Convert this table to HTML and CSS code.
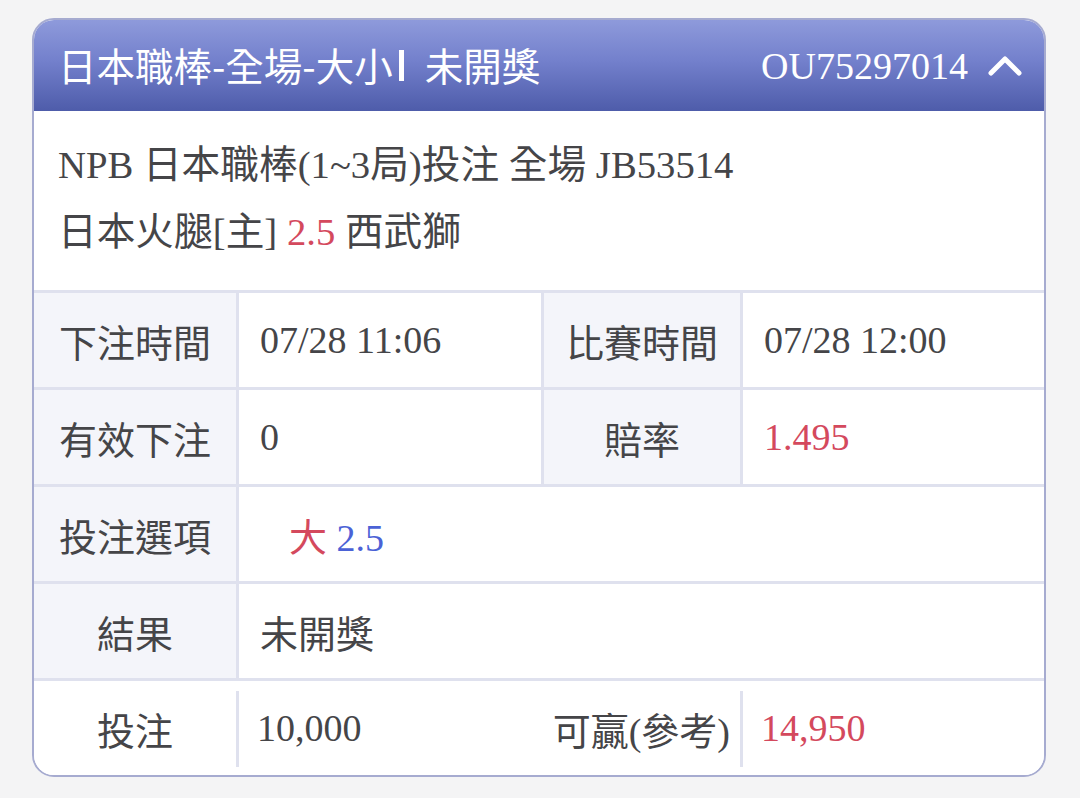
FILE: index.html
```html
<!DOCTYPE html>
<html lang="zh-Hant">
<head>
<meta charset="utf-8">
<title>注單</title>
<link rel="stylesheet" href="styles.css">
</head>
<body>
<div class="card">
  <div class="head">
    <div class="title">日本職棒-全場-大小<span class="bar"></span>未開獎</div>
    <div class="head-right">
      <span class="order">OU75297014</span>
      <svg class="chev" width="34" height="22" viewBox="0 0 34 22"><polyline points="3,19 17,5 31,19" fill="none" stroke="#fff" stroke-width="5" stroke-linecap="round" stroke-linejoin="round"/></svg>
    </div>
  </div>
  <div class="info">
    <div class="line">NPB 日本職棒(1~3局)投注 全場 JB53514</div>
    <div class="line">日本火腿[主] <span class="red">2.5</span> 西武獅</div>
  </div>
  <div class="table">
    <div class="row">
      <div class="cell label">下注時間</div>
      <div class="cell val">07/28 11:06</div>
      <div class="cell label">比賽時間</div>
      <div class="cell val">07/28 12:00</div>
    </div>
    <div class="row">
      <div class="cell label">有效下注</div>
      <div class="cell val">0</div>
      <div class="cell label">賠率</div>
      <div class="cell val red">1.495</div>
    </div>
    <div class="row">
      <div class="cell label">投注選項</div>
      <div class="cell val span3 pick"><span><span class="red">大</span> <span class="blue">2.5</span></span></div>
    </div>
    <div class="row">
      <div class="cell label">結果</div>
      <div class="cell val span3">未開獎</div>
    </div>
    <div class="row last">
      <div class="cell label">投注</div>
      <div class="cell val">10,000</div>
      <div class="cell label right">可贏(參考)</div>
      <div class="cell val red">14,950</div>
    </div>
  </div>
</div>
</body>
</html>
```
FILE: styles.css
```css
html, body {
  margin: 0;
  padding: 0;
  background: #f4f4f5;
}
body {
  padding: 18px 34px 0 32px;
  font-family: "Liberation Serif", "Noto Sans CJK TC", serif;
  color: #454548;
}
.card {
  border: 2px solid #a6abd0;
  border-radius: 22px;
  overflow: hidden;
  background: #fff;
  width: 1010px;
}
.head {
  height: 91px;
  background: linear-gradient(180deg, #8e9adb 0%, #7380cc 45%, #4e5caa 100%);
  display: flex;
  align-items: center;
  justify-content: space-between;
  padding: 0 22px 0 24px;
  color: #fff;
}
.title {
  font-family: "Noto Sans CJK TC", sans-serif;
  font-size: 38.5px;
  display: flex;
  align-items: center;
  margin-top: -4px;
}
.bar {
  display: inline-block;
  width: 5px;
  height: 31px;
  background: #fff;
  margin: 4px 21px 0 6px;
}
.head-right {
  display: flex;
  align-items: center;
  gap: 20px;
}
.order {
  font-family: "Liberation Serif", serif;
  font-size: 38px;
}
.chev {
  display: block;
  margin-top: -2px;
}
.info {
  padding: 21px 24px 24px 24px;
  font-size: 38.7px;
}
.line {
  height: 67px;
  line-height: 67px;
  white-space: nowrap;
}
.red { color: #d4495d; }
.blue { color: #4b62d6; }
.table {
  display: flex;
  flex-direction: column;
}
.row {
  display: grid;
  grid-template-columns: 202px 305px 199px 1fr;
  border-top: 3px solid #dfe1ee;
  height: 94px;
}
.cell {
  display: flex;
  align-items: center;
  font-size: 38px;
  white-space: nowrap;
}
.cell + .cell {
  border-left: 3px solid #dfe1ee;
}
.label {
  background: #f4f5fa;
  justify-content: center;
}
.val {
  padding-left: 21px;
  background: #fff;
}
.span3 {
  grid-column: 2 / 5;
}
.pick {
  padding-left: 50px;
}
.last .label {
  background: #fff;
}
.last .cell + .cell {
  border-left: none;
}
.last .val {
  position: relative;
}
.last .val::before {
  content: "";
  position: absolute;
  left: 0;
  top: 10px;
  bottom: 8px;
  width: 3px;
  background: #dfe1ee;
}
.last .right {
  justify-content: flex-end;
  padding-right: 10px;
}
```
